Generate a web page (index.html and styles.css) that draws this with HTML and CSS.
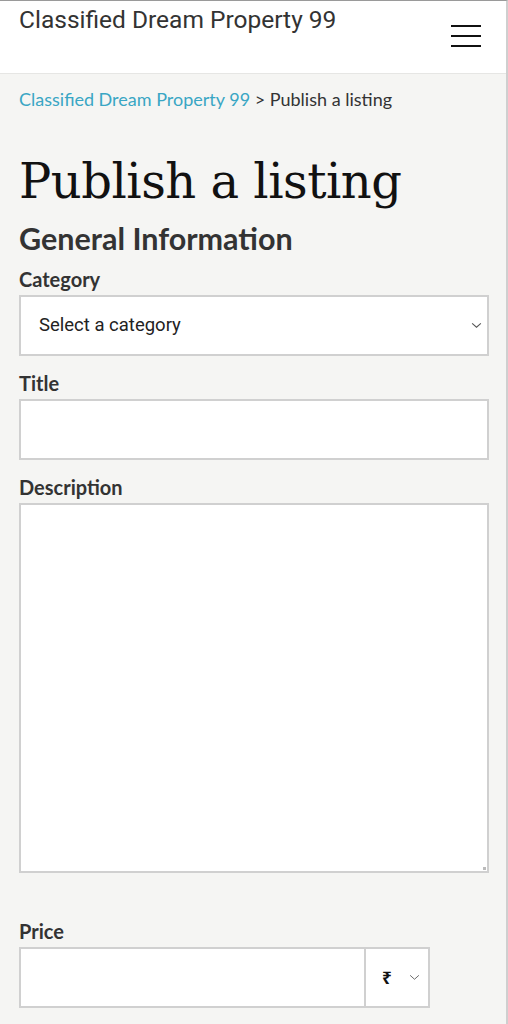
FILE: index.html
```html
<!DOCTYPE html>
<html lang="en">
<head>
<meta charset="utf-8">
<title>Publish a listing</title>
<link rel="stylesheet" href="styles.css">
</head>
<body>
<div class="page">
  <header class="site-header">
    <div class="brand">Classified Dream Property 99</div>
    <button class="menu-toggle" aria-label="Menu">
      <span></span><span></span><span></span>
    </button>
  </header>
  <main class="content">
    <nav class="crumbs"><a href="#">Classified Dream Property 99</a> &gt; Publish a listing</nav>
    <h1 class="page-title">Publish a listing</h1>
    <h2 class="section-title">General Information</h2>
    <form class="listing-form">
      <label class="field-label">Category</label>
      <div class="select-box">
        <span>Select a category</span>
        <svg class="chev" viewBox="0 0 12 8" width="11" height="7"><path d="M1 1.5 L6 6 L11 1.5" fill="none" stroke="#555" stroke-width="1.2"/></svg>
      </div>
      <label class="field-label">Title</label>
      <div class="text-box"></div>
      <label class="field-label">Description</label>
      <div class="text-area"><span class="grip"></span></div>
      <label class="field-label price-label">Price</label>
      <div class="price-row">
        <div class="price-input"></div>
        <div class="currency">
          <span class="rupee">₹</span>
          <svg class="chev" viewBox="0 0 12 8" width="11" height="7"><path d="M1 1.5 L6 6 L11 1.5" fill="none" stroke="#666" stroke-width="1.1"/></svg>
        </div>
      </div>
    </form>
  </main>
</div>
</body>
</html>
```

FILE: styles.css
```css
* { box-sizing: border-box; }
html, body { margin: 0; padding: 0; }
body {
  background: #f5f5f3;
  font-family: Lato, "Noto Sans", sans-serif;
  color: #333;
  height: 1024px;
  overflow: hidden;
}
.page {
  border-top: 1px solid #9a9a9a;
  border-right: 2px solid #cfcfcf;
  width: 508px;
  min-height: 1024px;
}
.site-header {
  background: #fff;
  height: 73px;
  border-bottom: 1px solid #e6e6e4;
  display: flex;
  justify-content: space-between;
  align-items: flex-start;
  padding: 0 25px 0 19px;
}
.brand {
  font-family: Roboto, sans-serif;
  font-size: 24.5px;
  color: #333;
  margin-top: 4px;
}
.menu-toggle {
  background: none;
  border: 0;
  padding: 0;
  margin-top: 24px;
  width: 30px;
  display: flex;
  flex-direction: column;
  gap: 8px;
}
.menu-toggle span {
  display: block;
  height: 2px;
  background: #111;
  width: 30px;
}
.content {
  padding: 14px 19px 0 19px;
}
.crumbs {
  font-size: 18px;
  color: #333;
  line-height: 22px;
}
.crumbs a {
  color: #39a6c4;
  text-decoration: none;
}
.page-title {
  font-family: "DejaVu Serif", serif;
  font-weight: normal;
  font-size: 48px;
  letter-spacing: -0.5px;
  color: #111;
  margin: 43px 0 0 0;
  line-height: 56px;
}
.section-title {
  font-size: 30.5px;
  font-weight: bold;
  color: #333;
  margin: 14.5px 0 0 0;
  line-height: 28px;
}
.listing-form {
  display: flex;
  flex-direction: column;
}
.field-label {
  font-size: 20px;
  font-weight: bold;
  color: #333;
  line-height: 28px;
  margin-top: 13px;
  margin-bottom: 2px;
}
.select-box, .text-box, .text-area, .price-input, .currency {
  background: #fff;
  border: 2px solid #d0d0d0;
}
.select-box {
  width: 470px;
  height: 61px;
  display: flex;
  align-items: center;
  justify-content: space-between;
  padding: 0 5px 0 18px;
  font-family: Roboto, sans-serif;
  font-size: 18.5px;
  color: #222;
}
.text-box {
  width: 470px;
  height: 61px;
}
.text-area {
  width: 470px;
  height: 370px;
  position: relative;
}
.grip {
  position: absolute;
  right: 1px;
  bottom: 1px;
  width: 3px;
  height: 3px;
  background: #bbb;
}
.price-label { margin-top: 44px; }
.price-row {
  display: flex;
}
.price-input {
  width: 347px;
  height: 61px;
}
.currency {
  width: 64px;
  height: 61px;
  border-left: 0;
  display: flex;
  align-items: center;
  justify-content: space-between;
  padding: 0 8px 0 16px;
  font-size: 17px;
  font-weight: bold;
  color: #111;
}
.rupee { font-family: "Noto Sans", sans-serif; }
```
